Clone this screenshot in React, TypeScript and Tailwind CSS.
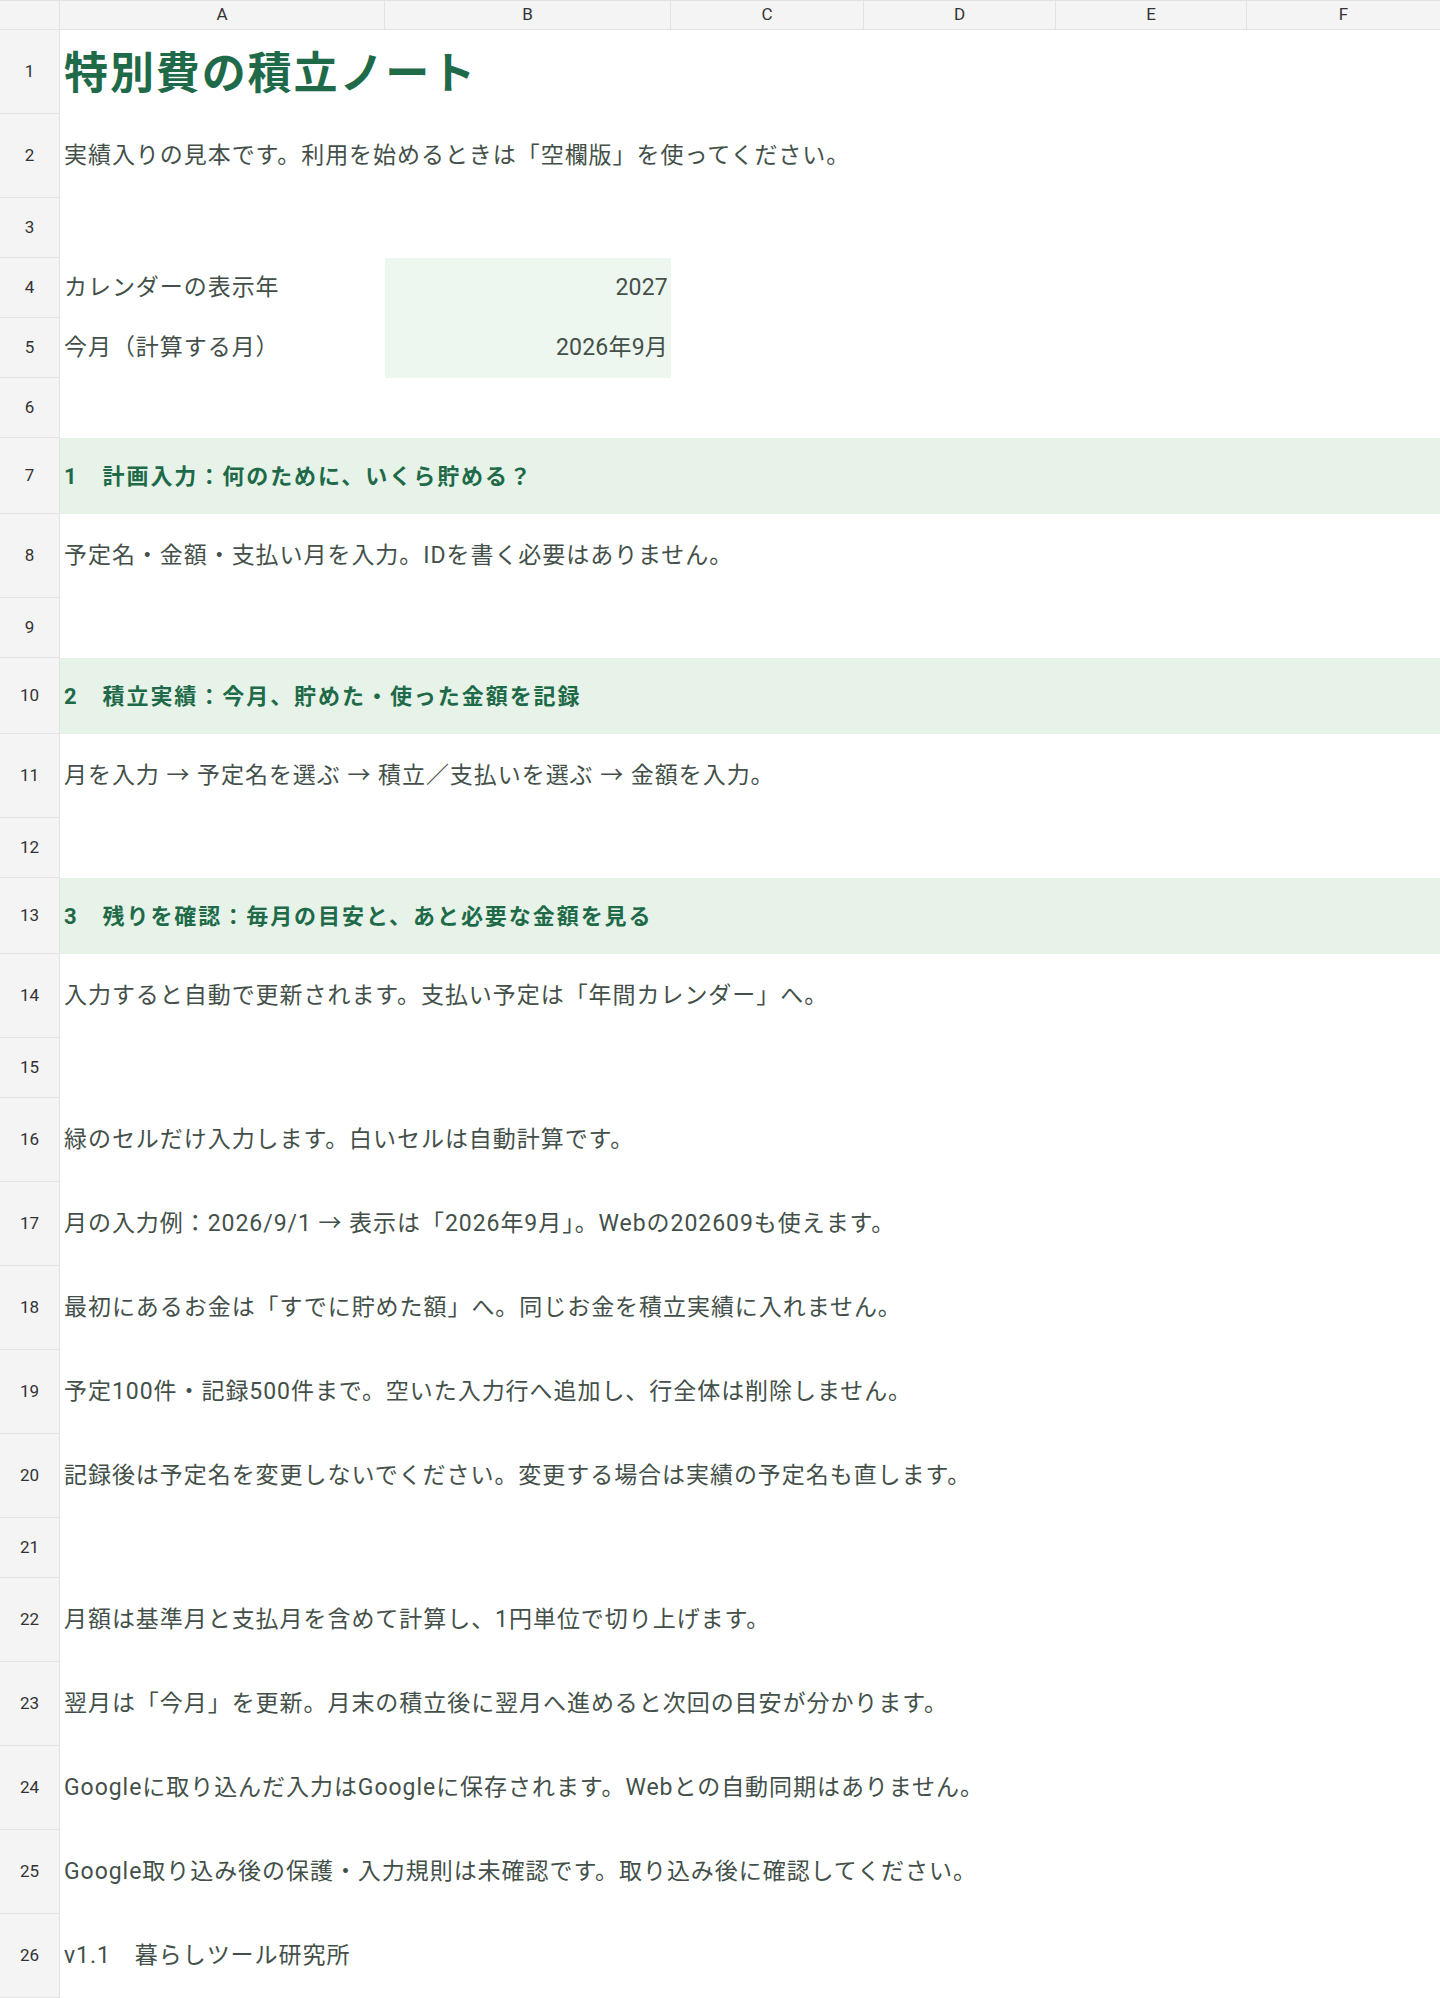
import React from "react";

type Row =
  | { n: number; h: number; kind: "title"; text: string }
  | { n: number; h: number; kind: "text"; text: string }
  | { n: number; h: number; kind: "section"; text: string }
  | { n: number; h: number; kind: "input"; label: string; value: string }
  | { n: number; h: number; kind: "empty" };

const rows: Row[] = [
  { n: 1, h: 84, kind: "title", text: "特別費の積立ノート" },
  { n: 2, h: 84, kind: "text", text: "実績入りの見本です。利用を始めるときは「空欄版」を使ってください。" },
  { n: 3, h: 60, kind: "empty" },
  { n: 4, h: 60, kind: "input", label: "カレンダーの表示年", value: "2027" },
  { n: 5, h: 60, kind: "input", label: "今月（計算する月）", value: "2026年9月" },
  { n: 6, h: 60, kind: "empty" },
  { n: 7, h: 76, kind: "section", text: "1　計画入力：何のために、いくら貯める？" },
  { n: 8, h: 84, kind: "text", text: "予定名・金額・支払い月を入力。IDを書く必要はありません。" },
  { n: 9, h: 60, kind: "empty" },
  { n: 10, h: 76, kind: "section", text: "2　積立実績：今月、貯めた・使った金額を記録" },
  { n: 11, h: 84, kind: "text", text: "月を入力 → 予定名を選ぶ → 積立／支払いを選ぶ → 金額を入力。" },
  { n: 12, h: 60, kind: "empty" },
  { n: 13, h: 76, kind: "section", text: "3　残りを確認：毎月の目安と、あと必要な金額を見る" },
  { n: 14, h: 84, kind: "text", text: "入力すると自動で更新されます。支払い予定は「年間カレンダー」へ。" },
  { n: 15, h: 60, kind: "empty" },
  { n: 16, h: 84, kind: "text", text: "緑のセルだけ入力します。白いセルは自動計算です。" },
  { n: 17, h: 84, kind: "text", text: "月の入力例：2026/9/1 → 表示は「2026年9月」。Webの202609も使えます。" },
  { n: 18, h: 84, kind: "text", text: "最初にあるお金は「すでに貯めた額」へ。同じお金を積立実績に入れません。" },
  { n: 19, h: 84, kind: "text", text: "予定100件・記録500件まで。空いた入力行へ追加し、行全体は削除しません。" },
  { n: 20, h: 84, kind: "text", text: "記録後は予定名を変更しないでください。変更する場合は実績の予定名も直します。" },
  { n: 21, h: 60, kind: "empty" },
  { n: 22, h: 84, kind: "text", text: "月額は基準月と支払月を含めて計算し、1円単位で切り上げます。" },
  { n: 23, h: 84, kind: "text", text: "翌月は「今月」を更新。月末の積立後に翌月へ進めると次回の目安が分かります。" },
  { n: 24, h: 84, kind: "text", text: "Googleに取り込んだ入力はGoogleに保存されます。Webとの自動同期はありません。" },
  { n: 25, h: 84, kind: "text", text: "Google取り込み後の保護・入力規則は未確認です。取り込み後に確認してください。" },
  { n: 26, h: 84, kind: "text", text: "v1.1　暮らしツール研究所" },
];

const cols = [
  { l: "A", w: "w-[325px]" },
  { l: "B", w: "w-[286px]" },
  { l: "C", w: "w-[193px]" },
  { l: "D", w: "w-[192px]" },
  { l: "E", w: "w-[191px]" },
  { l: "F", w: "w-[193px]" },
];

const bodyFont = { fontFamily: 'Roboto, "Noto Sans CJK JP", "Noto Sans", sans-serif' };

function RowContent({ r }: { r: Row }) {
  if (r.kind === "title") {
    return (
      <div className="flex-1 flex items-center pl-[4px] pb-[4px] whitespace-nowrap text-[44px] font-bold text-[#1e6a49] tracking-[1.9px]">
        {r.text}
      </div>
    );
  }
  if (r.kind === "text") {
    return (
      <div
        className="flex-1 flex items-center pl-[4px] whitespace-nowrap text-[23px] text-[#435049] tracking-[0.95px]"
        style={bodyFont}
      >
        {r.text}
      </div>
    );
  }
  if (r.kind === "section") {
    return (
      <div
        className="flex-1 flex items-center pl-[4px] whitespace-nowrap bg-[#e7f2e8] text-[22px] font-bold text-[#1e6a49] tracking-[1.95px]"
        style={bodyFont}
      >
        {r.text}
      </div>
    );
  }
  if (r.kind === "input") {
    return (
      <div className="flex-1 flex" style={bodyFont}>
        <div className="w-[325px] flex items-center pl-[4px] pt-[1px] whitespace-nowrap text-[23px] text-[#435049] tracking-[0.95px]">
          {r.label}
        </div>
        <div className="w-[286px] flex items-center justify-end pr-[3px] pt-[1px] bg-[#eef7ef] whitespace-nowrap text-[23px] text-[#435049] tracking-[0.2px]">
          {r.value}
        </div>
        <div className="flex-1" />
      </div>
    );
  }
  return <div className="flex-1" />;
}

export default function App() {
  return (
    <div
      className="w-[1440px] bg-white overflow-hidden"
      style={{ fontFamily: '"Noto Sans CJK JP", "Noto Sans", sans-serif' }}
    >
      <div className="flex h-[30px] bg-[#f4f4f4] border-t border-b border-[#e2e2e2] text-[17px] text-[#333]">
        <div className="w-[60px] border-r border-[#e2e2e2]" />
        {cols.map((c) => (
          <div
            key={c.l}
            className={`${c.w} flex items-center justify-center border-r border-[#e2e2e2] last:border-r-0`}
            style={{ fontFamily: 'Roboto, "Noto Sans", sans-serif' }}
          >
            {c.l}
          </div>
        ))}
      </div>
      {rows.map((r) => (
        <div key={r.n} className="flex" style={{ height: r.h }}>
          <div
            className="w-[60px] shrink-0 flex items-center justify-center bg-[#f4f4f4] border-r border-b border-[#e2e2e2] text-[17px] text-[#333]"
            style={{ fontFamily: 'Roboto, "Noto Sans", sans-serif' }}
          >
            {r.n}
          </div>
          <RowContent r={r} />
        </div>
      ))}
    </div>
  );
}
